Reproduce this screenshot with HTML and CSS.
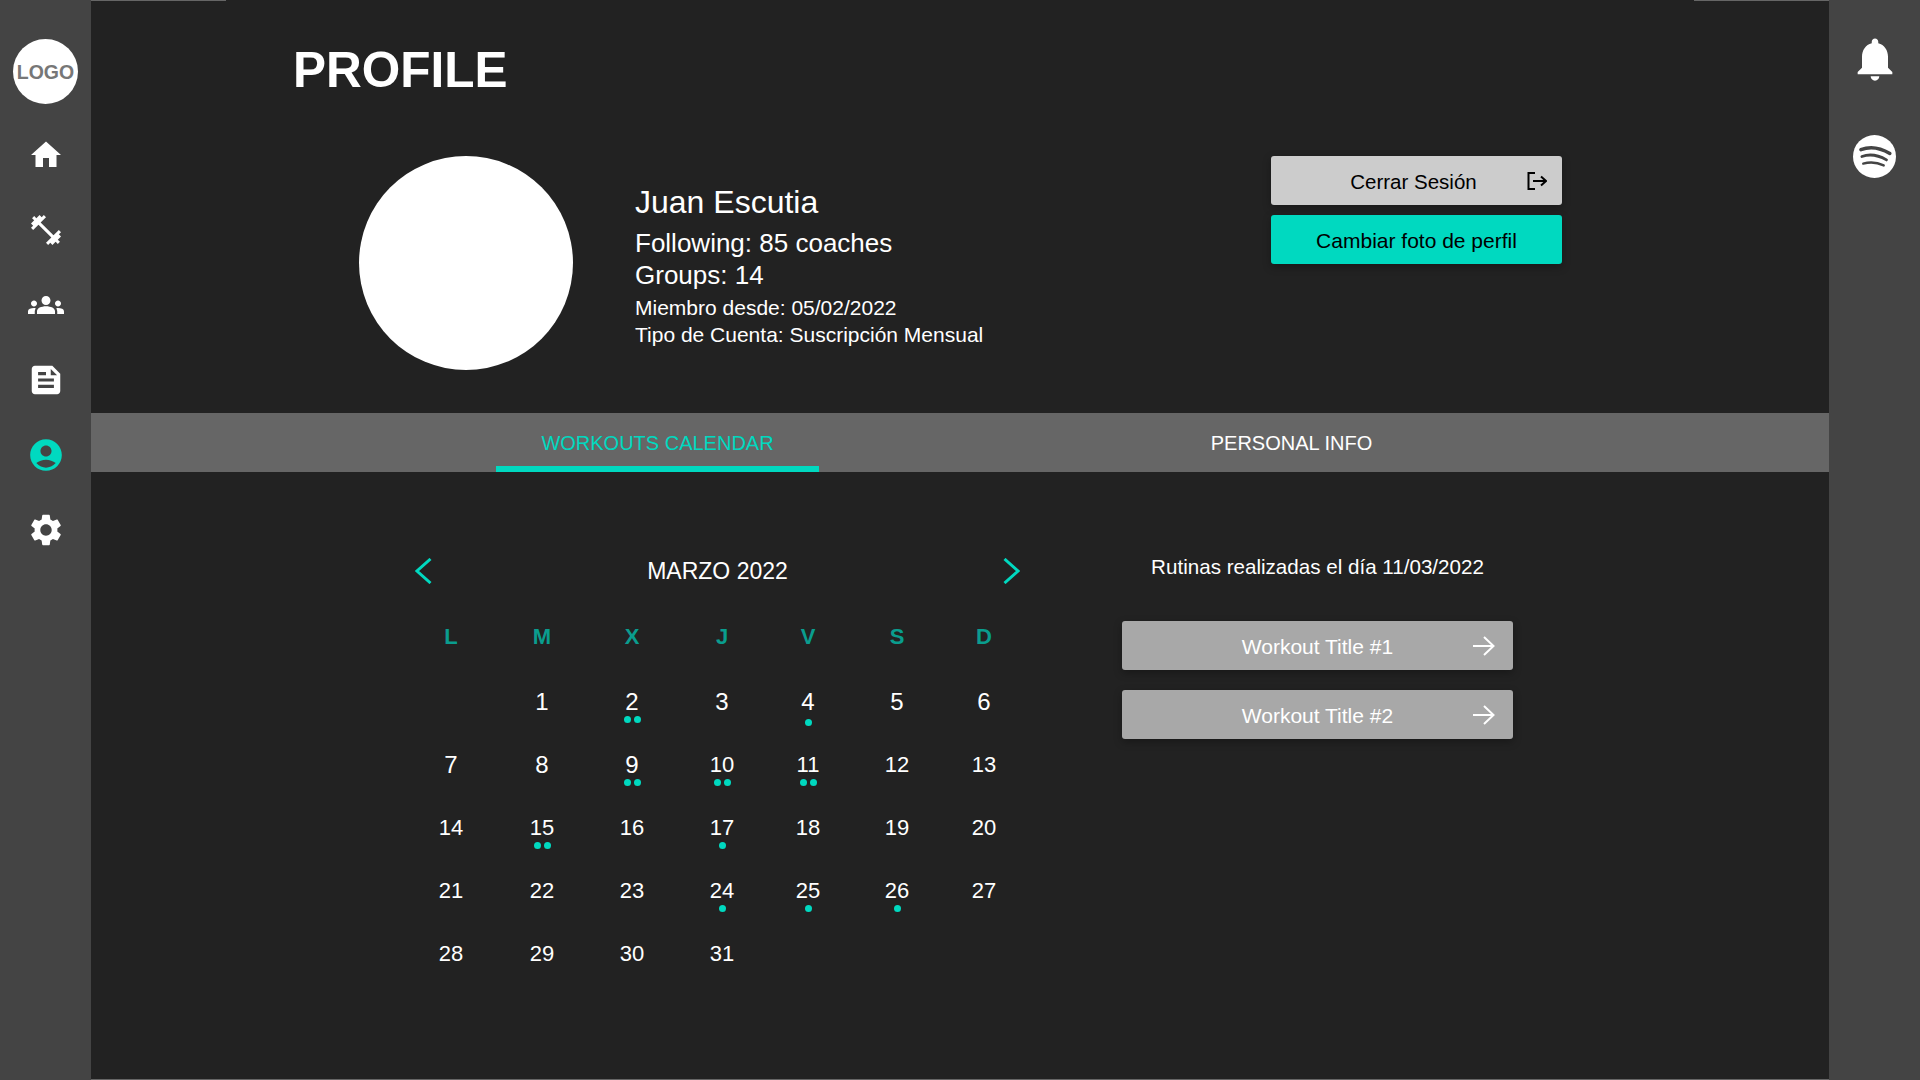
FILE: index.html
```html
<!DOCTYPE html>
<html lang="es">
<head>
    <meta charset="UTF-8">
    <meta name="viewport" content="width=device-width, initial-scale=1.0">
    <title>Profile</title>
    <link rel="stylesheet" href="styles.css">
</head>
<body>

<!-- Left navigation -->
<aside class="sidebar">
    <div class="logo">LOGO</div>
    <nav class="nav">
        <a class="nav-item"><svg class="icon-home" viewBox="0 0 24 24"><path d="M10 20v-6h4v6h5v-8h3L12 3 2 12h3v8z"/></svg></a>
        <a class="nav-item"><svg class="icon-home" viewBox="0 0 24 24"><path d="M20.57 14.86L22 13.43 20.57 12 17 15.57 8.43 7 12 3.43 10.57 2 9.14 3.43 7.71 2 5.57 4.14 4.14 2.71 2.71 4.14l1.43 1.43L2 7.71l1.43 1.43L2 10.57 3.43 12 7 8.43 15.57 17 12 20.57 13.43 22l1.43-1.43L16.29 22l2.14-2.14 1.43 1.43 1.43-1.43-1.43-1.43L22 16.29z"/></svg></a>
        <a class="nav-item"><svg class="icon-home" viewBox="0 0 24 24"><path d="M12 12.75c1.63 0 3.07.39 4.24.9 1.08.48 1.76 1.56 1.76 2.73V18H6v-1.61c0-1.18.68-2.26 1.76-2.73 1.17-.52 2.61-.91 4.24-.91zM4 13c1.1 0 2-.9 2-2s-.9-2-2-2-2 .9-2 2 .9 2 2 2zm1.13 1.1c-.37-.06-.74-.1-1.13-.1-.99 0-1.93.21-2.78.58C.48 14.9 0 15.62 0 16.43V18h4.5v-1.61c0-.83.23-1.61.63-2.29zM20 13c1.1 0 2-.9 2-2s-.9-2-2-2-2 .9-2 2 .9 2 2 2zm4 3.43c0-.81-.48-1.53-1.22-1.85-.85-.37-1.79-.58-2.78-.58-.39 0-.76.04-1.13.1.4.68.63 1.46.63 2.29V18H24v-1.57zM12 6c1.66 0 3 1.34 3 3s-1.34 3-3 3-3-1.34-3-3 1.34-3 3-3z"/></svg></a>
        <a class="nav-item"><svg class="icon-large" viewBox="0 0 24 24"><path d="M16 3H5c-1.1 0-2 .9-2 2v14c0 1.1.9 2 2 2h14c1.1 0 2-.9 2-2V8l-5-5zM7 7h5v2H7V7zm10 10H7v-2h10v2zm0-4H7v-2h10v2zm-2-4V5l4 4h-4z"/></svg></a>
        <a class="nav-item active"><svg class="icon-large" viewBox="0 0 24 24"><path d="M12 2C6.48 2 2 6.48 2 12s4.48 10 10 10 10-4.48 10-10S17.52 2 12 2zm0 4c1.93 0 3.5 1.57 3.5 3.5S13.93 13 12 13s-3.5-1.57-3.5-3.5S10.07 6 12 6zm0 14c-2.03 0-4.43-.82-6.14-2.88C7.55 15.8 9.68 15 12 15s4.45.8 6.14 2.12C16.43 19.18 14.03 20 12 20z"/></svg></a>
        <a class="nav-item"><svg class="icon-large" viewBox="0 0 24 24"><path d="M19.14 12.94c.04-.3.06-.61.06-.94 0-.32-.02-.64-.07-.94l2.03-1.58c.18-.14.23-.41.12-.61l-1.92-3.32c-.12-.22-.37-.29-.59-.22l-2.39.96c-.5-.38-1.03-.7-1.62-.94l-.36-2.54c-.04-.24-.24-.41-.48-.41h-3.84c-.24 0-.43.17-.47.41l-.36 2.54c-.59.24-1.13.57-1.62.94l-2.39-.96c-.22-.08-.47 0-.59.22L2.74 8.87c-.12.21-.08.47.12.61l2.03 1.58c-.05.3-.09.63-.09.94s.02.64.07.94l-2.03 1.58c-.18.14-.23.41-.12.61l1.92 3.32c.12.22.37.29.59.22l2.39-.96c.5.38 1.03.7 1.62.94l.36 2.54c.05.24.24.41.48.41h3.84c.24 0 .44-.17.47-.41l.36-2.54c.59-.24 1.13-.56 1.62-.94l2.39.96c.22.08.47 0 .59-.22l1.92-3.32c.12-.22.07-.47-.12-.61l-2.01-1.58zM12 15.6c-1.98 0-3.6-1.62-3.6-3.6s1.62-3.6 3.6-3.6 3.6 1.62 3.6 3.6-1.62 3.6-3.6 3.6z"/></svg></a>
    </nav>
</aside>

<main class="main">
    <div class="top-lines"><span class="top-line"></span><span class="top-line"></span></div>

    <h1 class="page-title">PROFILE</h1>

    <section class="profile-row">
        <div class="avatar"></div>
        <div class="profile-info">
            <p class="profile-name">Juan Escutia</p>
            <p class="profile-stat">Following: 85 coaches</p>
            <p class="profile-stat">Groups: 14</p>
            <p class="profile-meta first">Miembro desde: 05/02/2022</p>
            <p class="profile-meta">Tipo de Cuenta: Suscripción Mensual</p>
        </div>
        <div class="profile-actions">
            <button class="btn btn-grey">
                <span class="btn-logout-text">Cerrar Sesión</span>
                <svg class="btn-icon" viewBox="0 0 20 18"><path d="M8 1H1.5v16H8M6 9h13M14 4.5L19 9l-5 4.5" fill="none" stroke="#000" stroke-width="2"/></svg>
            </button>
            <button class="btn btn-teal"><span>Cambiar foto de perfil</span></button>
        </div>
    </section>

    <!-- Tabs -->
    <div class="tabs">
        <a class="tab active">WORKOUTS CALENDAR</a>
        <a class="tab">PERSONAL INFO</a>
    </div>

    <section class="content">
        <div class="calendar">
            <div class="cal-head">
                <svg class="chevron" viewBox="0 0 17 26"><path d="M15.5 1L2 13l13.5 12" fill="none" stroke="#00d9c0" stroke-width="3"/></svg>
                <span class="cal-month">MARZO 2022</span>
                <svg class="chevron" viewBox="0 0 17 26"><path d="M1.5 1L15 13 1.5 25" fill="none" stroke="#00d9c0" stroke-width="3"/></svg>
            </div>
            <div class="cal-week">
                <span>L</span><span>M</span><span>X</span><span>J</span><span>V</span><span>S</span><span>D</span>
            </div>
            <div class="cal-days">
                <div class="day"></div>
                <div class="day big">1</div>
                <div class="day big">2<div class="dots"><i></i><i></i></div></div>
                <div class="day big">3</div>
                <div class="day big">4<div class="dots low"><i></i></div></div>
                <div class="day big">5</div>
                <div class="day big">6</div>

                <div class="day big">7</div>
                <div class="day big">8</div>
                <div class="day big">9<div class="dots"><i></i><i></i></div></div>
                <div class="day">10<div class="dots"><i></i><i></i></div></div>
                <div class="day">11<div class="dots"><i></i><i></i></div></div>
                <div class="day">12</div>
                <div class="day">13</div>

                <div class="day">14</div>
                <div class="day">15<div class="dots"><i></i><i></i></div></div>
                <div class="day">16</div>
                <div class="day">17<div class="dots"><i></i></div></div>
                <div class="day">18</div>
                <div class="day">19</div>
                <div class="day">20</div>

                <div class="day">21</div>
                <div class="day">22</div>
                <div class="day">23</div>
                <div class="day">24<div class="dots"><i></i></div></div>
                <div class="day">25<div class="dots"><i></i></div></div>
                <div class="day">26<div class="dots"><i></i></div></div>
                <div class="day">27</div>

                <div class="day">28</div>
                <div class="day">29</div>
                <div class="day">30</div>
                <div class="day">31</div>
            </div>
        </div>

        <div class="routines">
            <p class="routines-title">Rutinas realizadas el día 11/03/2022</p>
            <button class="btn btn-workout">
                <span>Workout Title #1</span>
                <svg class="btn-arrow" viewBox="0 0 22 20"><path d="M0 10h20M11 1l9.5 9-9.5 9" fill="none" stroke="#fff" stroke-width="2"/></svg>
            </button>
            <button class="btn btn-workout">
                <span>Workout Title #2</span>
                <svg class="btn-arrow" viewBox="0 0 22 20"><path d="M0 10h20M11 1l9.5 9-9.5 9" fill="none" stroke="#fff" stroke-width="2"/></svg>
            </button>
        </div>
    </section>
</main>

<!-- Right rail -->
<aside class="sidebar rail">
    <svg class="icon-bell" viewBox="0 0 24 24"><path d="M12 22c1.1 0 2-.9 2-2h-4c0 1.1.89 2 2 2zm6-6v-5c0-3.07-1.64-5.64-4.5-6.32V4c0-.83-.67-1.5-1.5-1.5s-1.5.67-1.5 1.5v.68C7.63 5.36 6 7.92 6 11v5l-2 2v1h16v-1l-2-2z"/></svg>
    <svg class="icon-spotify" viewBox="0 0 42 42">
        <circle cx="21" cy="21" r="21" fill="#fff"/>
        <path d="M7.7 14.3Q21 9 36 18" stroke-width="3.4"/>
        <path d="M8.7 21Q20 17 32.7 24.3" stroke-width="2.8"/>
        <path d="M10 28Q20 25 30 29.7" stroke-width="2.3"/>
    </svg>
</aside>

</body>
</html>
```

FILE: styles.css
```css
* {
    box-sizing: border-box;
}

body {
    margin: 0;
    height: 1080px;
    display: flex;
    overflow: hidden;
    background-color: #222;
    color: #fff;
    font-family: "Liberation Sans", Arial, sans-serif;
}

p, h1 {
    margin: 0;
}

/* sidebars */
.sidebar {
    width: 91px;
    flex-shrink: 0;
    display: flex;
    flex-direction: column;
    align-items: center;
    padding-top: 39px;
    background-color: #444;
}

.logo {
    width: 65px;
    height: 65px;
    padding-top: 2px;
    border-radius: 50%;
    background-color: #fff;
    color: #777;
    font-size: 19.5px;
    font-weight: bold;
    display: flex;
    align-items: center;
    justify-content: center;
}

.nav {
    margin-top: 13px;
    width: 100%;
}

.nav-item {
    height: 75px;
    display: flex;
    align-items: center;
    justify-content: center;
    fill: #fff;
}

.nav-item.active {
    fill: #00d9c0;
}

.icon-home {
    width: 36px;
    height: 36px;
}

.icon-large {
    width: 38px;
    height: 38px;
}

.rail {
    padding-top: 33px;
}

.icon-bell {
    width: 52px;
    height: 52px;
    fill: #fff;
}

.icon-spotify {
    width: 43px;
    height: 43px;
    margin-top: 50px;
}

.icon-spotify path {
    fill: none;
    stroke: #444;
    stroke-linecap: round;
}

/* main column */
.main {
    flex: 1;
    border-bottom: 1px solid #666;
}

.top-lines {
    height: 1px;
    display: flex;
    justify-content: space-between;
}

.top-line {
    width: 135px;
    background-color: #666;
}

.page-title {
    margin: 40px 0 0 202px;
    font-size: 49.5px;
    line-height: 58px;
    font-weight: bold;
}

.profile-row {
    display: flex;
    margin-top: 57px;
    padding: 0 267px 0 268px;
    height: 257px;
}

.avatar {
    width: 214px;
    height: 214px;
    border-radius: 50%;
    background-color: #fff;
}

.profile-info {
    margin: 27px 0 0 62px;
}

.profile-name {
    font-size: 32px;
    line-height: 38px;
    margin-bottom: 6px;
}

.profile-stat {
    font-size: 26px;
    line-height: 32px;
}

.profile-meta {
    font-size: 21px;
    line-height: 27px;
}

.profile-meta.first {
    margin-top: 3px;
}

.profile-actions {
    margin-left: auto;
    width: 291px;
    display: flex;
    flex-direction: column;
    gap: 10px;
}

/* buttons */
.btn {
    height: 49px;
    width: 100%;
    border: none;
    border-radius: 3px;
    padding: 0 15px;
    display: grid;
    grid-template-columns: 1fr auto 1fr;
    align-items: center;
    font-family: inherit;
    font-size: 21px;
    box-shadow: 0 3px 8px rgba(0, 0, 0, 0.3);
}

.btn span {
    grid-column: 2;
    padding-top: 3px;
}

.btn-grey {
    background-color: #ccc;
    color: #000;
    font-size: 20.5px;
}

.btn .btn-logout-text {
    padding-right: 6px;
}

.btn-teal {
    background-color: #00d9c0;
    color: #000;
}

.btn-icon {
    grid-column: 3;
    justify-self: end;
    width: 20px;
    height: 18px;
}

.btn-workout {
    background-color: #a8a8a8;
    color: #fff;
    padding: 0 18px;
    margin-bottom: 20px;
}

.btn-arrow {
    grid-column: 3;
    justify-self: end;
    width: 22px;
    height: 20px;
}

/* tabs */
.tabs {
    height: 59px;
    background-color: #666;
    display: flex;
    padding-left: 405px;
    gap: 311px;
}

.tab {
    width: 323px;
    display: flex;
    align-items: center;
    justify-content: center;
    padding: 8px 0 0;
    border-bottom: 6px solid transparent;
    font-size: 20px;
    color: #fff;
}

.tab.active {
    color: #00d9c0;
    border-bottom-color: #00d9c0;
}

/* calendar */
.content {
    display: flex;
    padding: 79px 0 0 316px;
}

.calendar {
    width: 620px;
}

.cal-head {
    height: 40px;
    display: flex;
    align-items: center;
    justify-content: space-between;
    padding: 0 7px 0 8px;
}

.chevron {
    width: 17px;
    height: 26px;
}

.cal-month {
    font-size: 23px;
}

/* the columns are not evenly spaced in the design */
.cal-week,
.cal-days {
    display: grid;
    grid-template-columns: 88px 94px 86px 94px 78px 100px 74px;
    text-align: center;
}

.cal-week {
    margin-top: 31px;
    height: 30px;
    align-items: center;
    font-size: 22px;
    font-weight: bold;
    color: #0a9d8e;
}

.cal-days {
    margin-top: 36px;
    grid-auto-rows: 63px;
    font-size: 22px;
    line-height: 28px;
}

.day.big {
    font-size: 24px;
}

.dots {
    display: flex;
    justify-content: center;
    gap: 3px;
}

.dots.low {
    margin-top: 3px;
}

.dots i {
    width: 7px;
    height: 7px;
    border-radius: 50%;
    background-color: #00d9c0;
}

/* routines of the selected day */
.routines {
    width: 391px;
    margin: 4px 0 0 95px;
}

.routines-title {
    font-size: 20.6px;
    line-height: 24px;
    text-align: center;
    margin-bottom: 42px;
}
```
